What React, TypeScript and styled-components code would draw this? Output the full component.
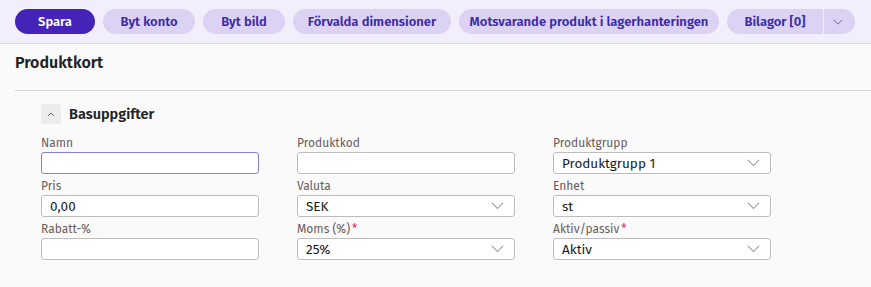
import React from "react";
import styled, { createGlobalStyle } from "styled-components";

const GlobalStyle = createGlobalStyle`
  html, body { margin: 0; padding: 0; background: #fafafa; }
  body { font-family: "Fira Sans", Lato, "Noto Sans", sans-serif; color: #222; }
  * { box-sizing: border-box; }
`;

const Toolbar = styled.div`
  display: flex;
  align-items: center;
  gap: 8px;
  height: 44px;
  padding: 0 15px;
  background: #f3eefb;
  border-bottom: 1px solid #dcdcdc;
  overflow: hidden;
`;

const ActionButton = styled.button<{ $primary?: boolean; $w: number }>`
  flex: none;
  width: ${(p) => p.$w}px;
  height: 25px;
  padding: 0;
  border: none;
  border-radius: 13px;
  font-family: inherit;
  font-size: 13px;
  font-weight: 600;
  background: ${(p) => (p.$primary ? "#4522b8" : "#dcd2f4")};
  color: ${(p) => (p.$primary ? "#ffffff" : "#3a2aa6")};
  white-space: nowrap;
`;

const SplitGroup = styled.div`
  flex: none;
  display: flex;
  height: 25px;
  gap: 1px;
`;

const SplitMain = styled(ActionButton)`
  border-radius: 13px 0 0 13px;
`;

const SplitToggle = styled.button`
  width: 31px;
  border: none;
  border-radius: 0 13px 13px 0;
  background: #dcd2f4;
  display: flex;
  align-items: center;
  justify-content: center;
  padding: 0 3px 0 0;
`;

const Content = styled.div`
  padding: 0 0 0 15px;
`;

const PageTitle = styled.h1`
  margin: 0;
  padding: 9px 0 18px;
  font-size: 16px;
  font-weight: 600;
  color: #222;
  border-bottom: 1px solid #d4d4d4;
`;

const Section = styled.section`
  padding: 13px 0 0 26px;
`;

const SectionHeader = styled.div`
  display: flex;
  align-items: center;
  gap: 8px;
  margin-bottom: 14px;
`;

const CollapseButton = styled.button`
  width: 20px;
  height: 20px;
  border: none;
  border-radius: 3px;
  background: #ececec;
  display: flex;
  align-items: center;
  justify-content: center;
  padding: 0;
`;

const SectionTitle = styled.h2`
  margin: 0;
  font-size: 14.5px;
  font-weight: 600;
  color: #222;
`;

const FieldGrid = styled.div`
  display: grid;
  grid-template-columns: repeat(3, 218px);
  column-gap: 38px;
  row-gap: 7px;
`;

const Field = styled.div`
  display: flex;
  flex-direction: column;
  gap: 4px;
`;

const Label = styled.label`
  font-size: 12px;
  color: #6a5d5d;
  line-height: 10px;
  height: 10px;
`;

const Required = styled.span`
  color: #e0335a;
  margin-left: 2px;
`;

const Box = styled.div<{ $focused?: boolean }>`
  height: 22px;
  border: 1px solid ${(p) => (p.$focused ? "#8b7fd0" : "#bdbdbd")};
  border-radius: 3px;
  background: #fff;
  display: flex;
  align-items: center;
  justify-content: space-between;
  padding: 0 10px 0 8px;
  font-size: 13.5px;
  color: #1a1a1a;
`;

const Chevron = ({ color = "#9a9a9a", w = 13 }: { color?: string; w?: number }) => (
  <svg width={w} height={w / 2 + 1} viewBox="0 0 14 8" fill="none">
    <path d="M1 1l6 6 6-6" stroke={color} strokeWidth="1.2" />
  </svg>
);

type FieldDef = { label: string; value?: string; select?: boolean; required?: boolean; focused?: boolean };

const fields: FieldDef[] = [
  { label: "Namn", focused: true },
  { label: "Produktkod" },
  { label: "Produktgrupp", value: "Produktgrupp 1", select: true },
  { label: "Pris", value: "0,00" },
  { label: "Valuta", value: "SEK", select: true },
  { label: "Enhet", value: "st", select: true },
  { label: "Rabatt-%" },
  { label: "Moms (%)", value: "25%", select: true, required: true },
  { label: "Aktiv/passiv", value: "Aktiv", select: true, required: true },
];

export default function App() {
  return (
    <>
      <GlobalStyle />
      <Toolbar>
        <ActionButton $primary $w={80}>Spara</ActionButton>
        <ActionButton $w={92}>Byt konto</ActionButton>
        <ActionButton $w={82}>Byt bild</ActionButton>
        <ActionButton $w={158}>Förvalda dimensioner</ActionButton>
        <ActionButton $w={260}>Motsvarande produkt i lagerhanteringen</ActionButton>
        <SplitGroup>
          <SplitMain $w={96}>Bilagor [0]</SplitMain>
          <SplitToggle>
            <Chevron color="#5a4bb8" w={10} />
          </SplitToggle>
        </SplitGroup>
      </Toolbar>
      <Content>
        <PageTitle>Produktkort</PageTitle>
        <Section>
          <SectionHeader>
            <CollapseButton>
              <svg width="8" height="5" viewBox="0 0 8 5" fill="none">
                <path d="M1 4l3-3 3 3" stroke="#666" strokeWidth="1" />
              </svg>
            </CollapseButton>
            <SectionTitle>Basuppgifter</SectionTitle>
          </SectionHeader>
          <FieldGrid>
            {fields.map((f) => (
              <Field key={f.label}>
                <Label>
                  {f.label}
                  {f.required && <Required>*</Required>}
                </Label>
                <Box $focused={f.focused}>
                  <span>{f.value}</span>
                  {f.select && <Chevron />}
                </Box>
              </Field>
            ))}
          </FieldGrid>
        </Section>
      </Content>
    </>
  );
}
